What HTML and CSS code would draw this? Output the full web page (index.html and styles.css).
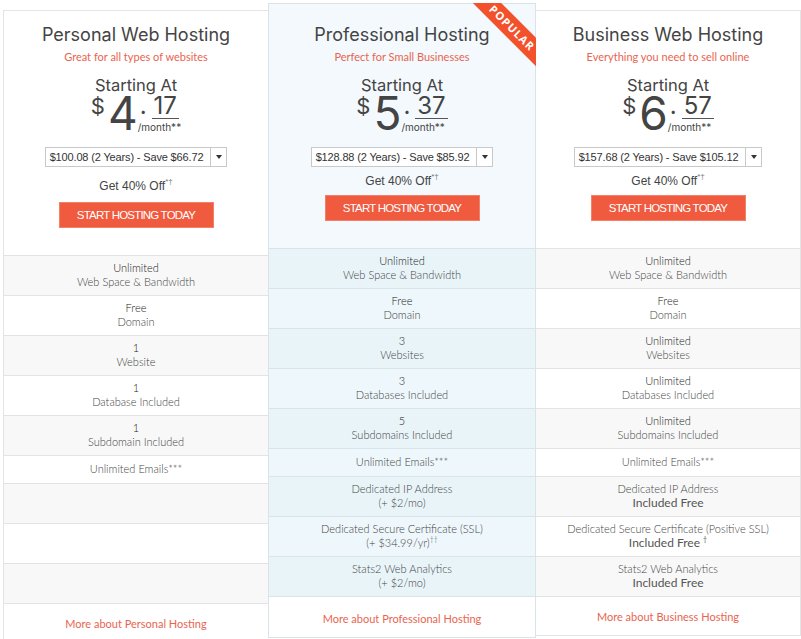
FILE: index.html
```html
<!DOCTYPE html>
<html lang="en">
<head>
  <meta charset="UTF-8" />
  <title>Web Hosting Plans</title>
  <link rel="stylesheet" href="styles.css">
</head>
<body>

  <div class="plans">

    <section class="plan plan--personal">
      <div class="plan-head">
        <h2 class="plan-name">Personal Web Hosting</h2>
        <p class="plan-tagline">Great for all types of websites</p>
        <p class="starting">Starting At</p>
        <div class="price">
          <span class="cur">$</span><span class="whole">4</span>
          <span class="cents"><span class="cents-top"><span class="dot">.</span><span class="frac">17</span></span><span class="per">/month**</span></span>
        </div>
        <div class="term"><span class="term-text">$100.08 (2 Years) - Save $66.72</span><span class="term-arrow"></span></div>
        <p class="offer">Get 40% Off<sup>*†</sup></p>
        <a class="cta" href="#">START HOSTING TODAY</a>
      </div>
      <ul class="features">
        <li><span class="f-main">Unlimited</span><span class="f-sub">Web Space &amp; Bandwidth</span></li>
        <li><span class="f-main">Free</span><span class="f-sub">Domain</span></li>
        <li><span class="f-main">1</span><span class="f-sub">Website</span></li>
        <li><span class="f-main">1</span><span class="f-sub">Database Included</span></li>
        <li><span class="f-main">1</span><span class="f-sub">Subdomain Included</span></li>
        <li class="single">Unlimited Emails***</li>
        <li class="blank"></li>
        <li class="blank"></li>
        <li class="blank"></li>
      </ul>
      <div class="plan-foot"><a href="#">More about Personal Hosting</a></div>
    </section>

    <section class="plan plan--pro">
      <div class="ribbon"><span>POPULAR</span></div>
      <div class="plan-head">
        <h2 class="plan-name">Professional Hosting</h2>
        <p class="plan-tagline">Perfect for Small Businesses</p>
        <p class="starting">Starting At</p>
        <div class="price">
          <span class="cur">$</span><span class="whole">5</span>
          <span class="cents"><span class="cents-top"><span class="dot">.</span><span class="frac">37</span></span><span class="per">/month**</span></span>
        </div>
        <div class="term"><span class="term-text">$128.88 (2 Years) - Save $85.92</span><span class="term-arrow"></span></div>
        <p class="offer">Get 40% Off<sup>*†</sup></p>
        <a class="cta" href="#">START HOSTING TODAY</a>
      </div>
      <ul class="features">
        <li><span class="f-main">Unlimited</span><span class="f-sub">Web Space &amp; Bandwidth</span></li>
        <li><span class="f-main">Free</span><span class="f-sub">Domain</span></li>
        <li><span class="f-main">3</span><span class="f-sub">Websites</span></li>
        <li><span class="f-main">3</span><span class="f-sub">Databases Included</span></li>
        <li><span class="f-main">5</span><span class="f-sub">Subdomains Included</span></li>
        <li class="single">Unlimited Emails***</li>
        <li><span class="f-sub">Dedicated IP Address</span><span class="f-sub">(+ $2/mo)</span></li>
        <li><span class="f-sub">Dedicated Secure Certificate (SSL)</span><span class="f-sub">(+ $34.99/yr)<sup>††</sup></span></li>
        <li><span class="f-sub">Stats2 Web Analytics</span><span class="f-sub">(+ $2/mo)</span></li>
      </ul>
      <div class="plan-foot"><a href="#">More about Professional Hosting</a></div>
    </section>

    <section class="plan plan--business">
      <div class="plan-head">
        <h2 class="plan-name">Business Web Hosting</h2>
        <p class="plan-tagline">Everything you need to sell online</p>
        <p class="starting">Starting At</p>
        <div class="price">
          <span class="cur">$</span><span class="whole">6</span>
          <span class="cents"><span class="cents-top"><span class="dot">.</span><span class="frac">57</span></span><span class="per">/month**</span></span>
        </div>
        <div class="term"><span class="term-text">$157.68 (2 Years) - Save $105.12</span><span class="term-arrow"></span></div>
        <p class="offer">Get 40% Off<sup>*†</sup></p>
        <a class="cta" href="#">START HOSTING TODAY</a>
      </div>
      <ul class="features">
        <li><span class="f-main">Unlimited</span><span class="f-sub">Web Space &amp; Bandwidth</span></li>
        <li><span class="f-main">Free</span><span class="f-sub">Domain</span></li>
        <li><span class="f-main">Unlimited</span><span class="f-sub">Websites</span></li>
        <li><span class="f-main">Unlimited</span><span class="f-sub">Databases Included</span></li>
        <li><span class="f-main">Unlimited</span><span class="f-sub">Subdomains Included</span></li>
        <li class="single">Unlimited Emails***</li>
        <li><span class="f-sub">Dedicated IP Address</span><span class="f-free">Included Free</span></li>
        <li><span class="f-sub">Dedicated Secure Certificate (Positive SSL)</span><span class="f-free">Included Free <sup>†</sup></span></li>
        <li><span class="f-sub">Stats2 Web Analytics</span><span class="f-free">Included Free</span></li>
      </ul>
      <div class="plan-foot"><a href="#">More about Business Hosting</a></div>
    </section>

  </div>

</body>
</html>
```

FILE: styles.css
```css
body {
  margin: 0;
  padding: 3px 0 0 3px;
  font-family: Lato, 'Open Sans', sans-serif;
  background-color: #fff;
  color: #555;
}

.plans {
  display: grid;
  grid-template-columns: 265px 268px 265px;
  align-items: start;
}

.plan {
  margin-top: 7px;
  background-color: #fff;
  border: 1px solid #e4e4e4;
  text-align: center;
}

.plan--personal {
  border-right: none;
}

.plan--business {
  border-left: none;
}

.plan--pro {
  position: relative;
  margin-top: 0;
  background-color: #f3f9fc;
  border-color: #d9e4e9;
}

/* header part */
.plan-head {
  padding: 12px 0 27px;
}

.plan--pro .plan-head {
  padding-top: 19px;
}

.plan-name {
  margin: 0;
  font: 400 18px/24px Inter, sans-serif;
  color: #444;
}

.plan-tagline {
  margin: 3px 0 0;
  font-size: 11px;
  line-height: 14px;
  color: #e8654f;
}

.starting {
  margin: 11px 0 0;
  font: 400 16.5px/20px Inter, sans-serif;
  color: #444;
}

.price {
  display: flex;
  justify-content: center;
  align-items: flex-start;
  font-family: Inter, sans-serif;
  color: #444;
}

.cur {
  font-size: 22px;
  line-height: 22px;
  margin-right: 3px;
}

.whole {
  font-size: 46px;
  line-height: 36px;
}

.cents {
  display: flex;
  flex-direction: column;
  align-items: flex-start;
}

.cents-top {
  display: flex;
  align-items: flex-start;
}

.dot {
  font-size: 24px;
  line-height: 22px;
  margin: 0 5px 0 2px;
}

.frac {
  font-size: 24px;
  line-height: 22px;
  padding: 0 2px 1px;
  border-bottom: 1px solid #555;
}

.per {
  font-size: 10px;
  line-height: 12px;
  margin-top: 2px;
}

.term {
  display: flex;
  width: fit-content;
  height: 20px;
  box-sizing: border-box;
  margin: 14px auto 0;
  border: 1px solid #c9c9c9;
  background-color: #fff;
  font: 11px/18px 'Liberation Sans', Arial, sans-serif;
  letter-spacing: -0.15px;
  color: #333;
}

.term-text {
  padding: 0 7px 0 4px;
}

.term-arrow {
  display: flex;
  align-items: center;
  justify-content: center;
  width: 15px;
  border-left: 1px solid #c9c9c9;
}

.term-arrow::after {
  content: '';
  border-top: 4px solid #333;
  border-left: 3px solid transparent;
  border-right: 3px solid transparent;
}

.offer {
  margin: 7px 0 0;
  font: 12px/14px 'Liberation Sans', Arial, sans-serif;
  color: #444;
}

.offer sup {
  font-size: 8px;
  line-height: 0;
  position: relative;
  top: -1px;
  color: #777;
}

.plan--personal .offer {
  margin-top: 12px;
}

.cta {
  display: flex;
  align-items: center;
  justify-content: center;
  width: 155px;
  height: 26px;
  box-sizing: border-box;
  margin: 7px auto 0;
  background-color: #f05a3e;
  border: 1px solid #f48068;
  color: #fff;
  font: 11.5px 'Liberation Sans', Arial, sans-serif;
  letter-spacing: -0.8px;
  text-decoration: none;
}

.plan--personal .cta {
  margin-top: 9px;
}

/* feature rows */
.features {
  list-style: none;
  margin: 0;
  padding: 0;
  border-top: 1px solid #e3e3e3;
}

.features li {
  min-height: 28px;
  padding: 5px 0 6px;
  border-bottom: 1px solid #e3e3e3;
  font-size: 11px;
  line-height: 14px;
  font-weight: 300;
  color: #444;
  background-color: #fff;
}

.features li:nth-child(odd) {
  background-color: #f8f8f8;
}

.features li.single {
  min-height: 14px;
  padding: 6px 0 7px;
}

.plan--pro .features {
  border-top-color: #d9e4e9;
}

.plan--pro .features li {
  background-color: #eef7fb;
  border-bottom-color: #d9e4e9;
}

.plan--pro .features li:nth-child(odd) {
  background-color: #e9f4f9;
}

.f-main,
.f-sub,
.f-free {
  display: block;
}

.f-main {
  color: #222;
}

.f-sub {
  color: #444;
}

.f-free {
  font-size: 12px;
  font-weight: 400;
  color: #555;
}

.features sup {
  font-size: 7px;
  line-height: 0;
}

.plan-foot {
  padding: 13px 0 11px;
  background-color: #fff;
  font-size: 11px;
  line-height: 14px;
}

.plan--pro .plan-foot {
  padding-top: 15px;
}

.plan-foot a {
  color: #e8654f;
  text-decoration: none;
}

/* corner ribbon */
.ribbon {
  position: absolute;
  top: -1px;
  right: -1px;
  width: 80px;
  height: 80px;
  overflow: hidden;
}

.ribbon span {
  position: absolute;
  top: 15px;
  left: 1px;
  width: 110px;
  height: 20px;
  background-color: #f2512b;
  color: #fff;
  font: 700 11px/20px 'Open Sans', sans-serif;
  letter-spacing: 1px;
  text-align: center;
  transform: rotate(45deg);
}
```
